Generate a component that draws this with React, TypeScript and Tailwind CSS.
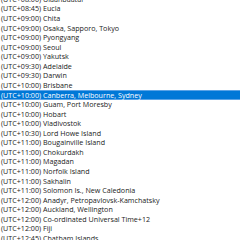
const zones: string[] = [
  "(UTC+08:00) Ulaanbaatar",
  "(UTC+08:45) Eucla",
  "(UTC+09:00) Chita",
  "(UTC+09:00) Osaka, Sapporo, Tokyo",
  "(UTC+09:00) Pyongyang",
  "(UTC+09:00) Seoul",
  "(UTC+09:00) Yakutsk",
  "(UTC+09:30) Adelaide",
  "(UTC+09:30) Darwin",
  "(UTC+10:00) Brisbane",
  "(UTC+10:00) Canberra, Melbourne, Sydney",
  "(UTC+10:00) Guam, Port Moresby",
  "(UTC+10:00) Hobart",
  "(UTC+10:00) Vladivostok",
  "(UTC+10:30) Lord Howe Island",
  "(UTC+11:00) Bougainville Island",
  "(UTC+11:00) Chokurdakh",
  "(UTC+11:00) Magadan",
  "(UTC+11:00) Norfolk Island",
  "(UTC+11:00) Sakhalin",
  "(UTC+11:00) Solomon Is., New Caledonia",
  "(UTC+12:00) Anadyr, Petropavlovsk-Kamchatsky",
  "(UTC+12:00) Auckland, Wellington",
  "(UTC+12:00) Co-ordinated Universal Time+12",
  "(UTC+12:00) Fiji",
  "(UTC+12:45) Chatham Islands",
]

const SELECTED = 10

export default function App() {
  return (
    <div className="h-[240px] w-[240px] overflow-hidden bg-white font-['Open_Sans',sans-serif] text-[7.15px] text-[#222]">
      <ul className="-mt-[5.5px] flex flex-col">
        {zones.map((z, i) => (
          <li
            key={z}
            className={
              i === SELECTED
                ? "flex h-[9.57px] items-center whitespace-nowrap border-y border-[#5aa3e6] bg-[#0078d7] pl-[1px] text-white"
                : "flex h-[9.57px] items-center whitespace-nowrap pl-[1px]"
            }
          >
            {z}
          </li>
        ))}
      </ul>
    </div>
  )
}
